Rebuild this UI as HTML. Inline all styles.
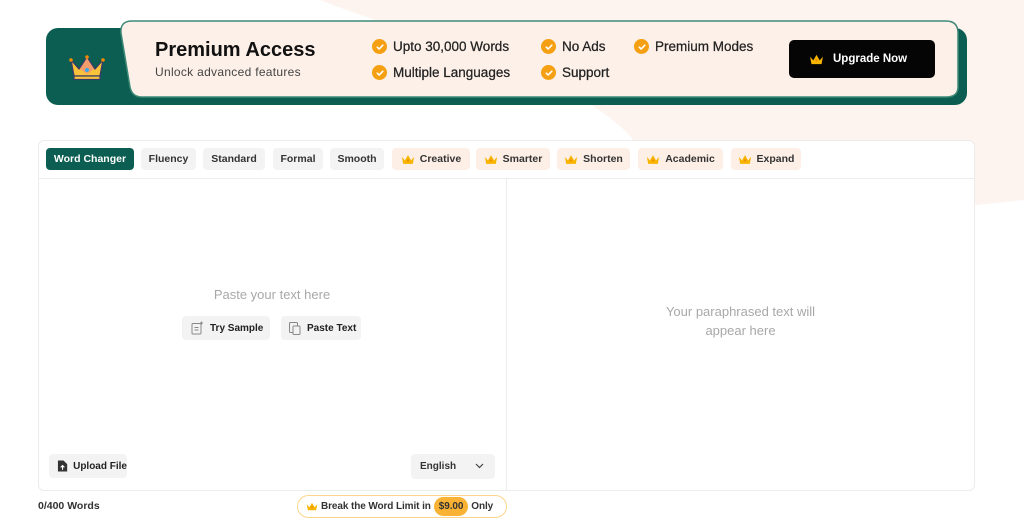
<!DOCTYPE html>
<html><head><meta charset="utf-8"><style>
*{margin:0;padding:0;box-sizing:border-box}
body{width:1024px;height:528px;background:#fff;font-family:"Liberation Sans",sans-serif;position:relative;overflow:hidden;color:#222}
.abs{position:absolute;white-space:nowrap}
.tab{position:absolute;top:148px;height:22px;border-radius:4px;background:#f3f3f3;font-size:10.5px;font-weight:bold;color:#333;display:flex;align-items:center;justify-content:center;gap:5px;white-space:nowrap}
.tab.p{background:#fdefe6}
.feat{position:absolute;font-size:13.5px;color:#222;display:flex;align-items:center;gap:6px;white-space:nowrap;-webkit-text-stroke:.25px #222}
.chk{width:15px;height:15px;border-radius:50%;background:#f5a012;display:inline-flex;align-items:center;justify-content:center}
.btn{position:absolute;background:#f3f3f3;border-radius:4px;font-size:10px;font-weight:bold;display:flex;align-items:center;gap:6px;padding-left:8px;white-space:nowrap}
</style></head><body>
<svg class="abs" style="left:0;top:0" width="1024" height="528"><path d="M320,0 C420,40 600,80 640,150 L640,240 L1024,200 L1024,0 Z" fill="#fdf4f0"/></svg>
<svg width="0" height="0" style="position:absolute"><defs><symbol id="cr" viewBox="0 0 16 12"><path d="M1,3 L4.5,7 L8,1 L11.5,7 L15,3 L13.5,11 L2.5,11 Z" fill="#f7b500"/><circle cx="8" cy="7" r="1.3" fill="#f08a00"/></symbol><symbol id="ck" viewBox="0 0 10 10"><path d="M2.3,5.2 L4.2,7 L7.8,3.2" stroke="#fff" stroke-width="1.6" fill="none" stroke-linecap="round" stroke-linejoin="round"/></symbol></defs></svg>
<div class="abs" style="left:46px;top:28px;width:921px;height:77px;background:#0b5e51;border-radius:12px"></div>
<svg class="abs" style="left:118px;top:20px" width="842" height="80"><path d="M14,1 L828,1 Q840,1 840,13 L840,67 Q840,77 828,77 L24,77 Q14,77 12,67 L3,13 Q2,1 14,1 Z" fill="#fdf0e8" stroke="#3d8a78" stroke-width="1.5"/></svg>
<svg class="abs" style="left:68px;top:54px" width="38" height="28" viewBox="0 0 38 28"><path d="M3,6 L11,15 L19,3 L27,15 L35,6 L32,22 L6,22 Z" fill="#f8c23a" stroke="#3a3a6a" stroke-width="1.3" stroke-linejoin="round"/><path d="M12,15 L19,4 L26,15 L19,20Z" fill="#f28c82" opacity=".7"/><rect x="6" y="22" width="26" height="3.5" fill="#f8c23a" stroke="#3a3a6a" stroke-width="1.2"/><circle cx="19" cy="16" r="2" fill="#3aa8e0"/><circle cx="3" cy="6" r="1.8" fill="#f08a00"/><circle cx="35" cy="6" r="1.8" fill="#f08a00"/><circle cx="19" cy="3" r="1.8" fill="#f08a00"/></svg>
<div class="abs" style="left:155px;top:39px;font-size:20px;font-weight:bold;color:#111">Premium Access</div>
<div class="abs" style="left:155px;top:65px;font-size:12px;color:#444;letter-spacing:.3px">Unlock advanced features</div>
<div class="feat" style="left:372px;top:39px"><span class="chk"><svg width="10" height="10"><use href="#ck"/></svg></span>Upto 30,000 Words</div>
<div class="feat" style="left:372px;top:65px"><span class="chk"><svg width="10" height="10"><use href="#ck"/></svg></span>Multiple Languages</div>
<div class="feat" style="left:541px;top:39px"><span class="chk"><svg width="10" height="10"><use href="#ck"/></svg></span>No Ads</div>
<div class="feat" style="left:541px;top:65px"><span class="chk"><svg width="10" height="10"><use href="#ck"/></svg></span>Support</div>
<div class="feat" style="left:634px;top:39px"><span class="chk"><svg width="10" height="10"><use href="#ck"/></svg></span>Premium Modes</div>
<div class="abs" style="left:789px;top:40px;width:146px;height:38px;background:#050505;border-radius:5px;color:#fff;font-size:11.5px;font-weight:bold;display:flex;align-items:center;padding-left:20px;gap:9px"><svg width="15" height="11"><use href="#cr"/></svg>Upgrade Now</div>

<div class="abs" style="left:38px;top:140px;width:937px;height:351px;background:#fff;border:1px solid #ececec;border-radius:6px"></div>
<div class="abs" style="left:39px;top:178px;width:935px;height:1px;background:#ececec"></div>
<div class="abs" style="left:506px;top:179px;width:1px;height:311px;background:#ececec"></div>
<div class="tab" style="left:46px;width:88px;background:#0b5e51;color:#fff">Word Changer</div>
<div class="tab" style="left:141px;width:55px">Fluency</div>
<div class="tab" style="left:203px;width:62px">Standard</div>
<div class="tab" style="left:273px;width:50px">Formal</div>
<div class="tab" style="left:330px;width:54px">Smooth</div>
<div class="tab p" style="left:392px;width:78px"><svg width="14" height="11"><use href="#cr"/></svg>Creative</div>
<div class="tab p" style="left:476px;width:74px"><svg width="14" height="11"><use href="#cr"/></svg>Smarter</div>
<div class="tab p" style="left:557px;width:73px"><svg width="14" height="11"><use href="#cr"/></svg>Shorten</div>
<div class="tab p" style="left:638px;width:85px"><svg width="14" height="11"><use href="#cr"/></svg>Academic</div>
<div class="tab p" style="left:731px;width:70px"><svg width="14" height="11"><use href="#cr"/></svg>Expand</div>

<div class="abs" style="left:38px;top:287px;width:468px;text-align:center;font-size:13px;color:#a8a8a8">Paste your text here</div>
<div class="btn" style="left:182px;top:316px;width:88px;height:24px"><svg width="14" height="14" viewBox="0 0 14 14" fill="none" stroke="#888" stroke-width="1"><rect x="2" y="2.5" width="9" height="10.5" rx="1"/><path d="M4.5,6.5h4M4.5,9h4M11.5,0.5v3M10,2h3"/></svg>Try Sample</div>
<div class="btn" style="left:281px;top:316px;width:80px;height:24px;gap:5px;padding-left:7px"><svg width="14" height="14" viewBox="0 0 14 14" fill="none" stroke="#888" stroke-width="1"><rect x="1.5" y="1.5" width="8" height="10" rx="1"/><rect x="5" y="5" width="7" height="8.5" rx="1" fill="#f3f3f3"/></svg>Paste Text</div>
<div class="abs" style="left:507px;top:302px;width:467px;text-align:center;font-size:13px;line-height:19px;color:#a8a8a8">Your paraphrased text will<br>appear here</div>
<div class="btn" style="left:49px;top:454px;width:78px;height:24px;gap:5px"><svg width="12" height="14" viewBox="0 0 12 14"><path d="M1,1 L7,1 L11,5 L11,13 L1,13 Z" fill="#333"/><path d="M6,11V7M4,8.5L6,6.5L8,8.5" stroke="#fff" stroke-width="1.2" fill="none"/></svg>Upload File</div>
<div class="abs" style="left:411px;top:454px;width:84px;height:25px;background:#f3f3f3;border-radius:4px;font-size:10px;font-weight:bold;color:#333;padding:7px 0 0 9px">English<svg class="abs" style="left:64px;top:9px" width="9" height="6"><path d="M1,1L4.5,4.5L8,1" stroke="#444" stroke-width="1.2" fill="none"/></svg></div>
<div class="abs" style="left:38px;top:500px;font-size:10.5px;font-weight:bold;color:#333">0/400 Words</div>
<div class="abs" style="left:297px;top:495px;width:210px;height:23px;border:1.5px solid #fbd58a;border-radius:12px;font-size:10px;font-weight:bold;color:#333;display:flex;align-items:center;padding-left:8px;gap:3px;letter-spacing:-.1px"><svg width="12" height="9"><use href="#cr"/></svg>Break the Word Limit in<span style="background:#f9b233;border-radius:10px;padding:4px 5px">$9.00</span>Only</div>
</body></html>
